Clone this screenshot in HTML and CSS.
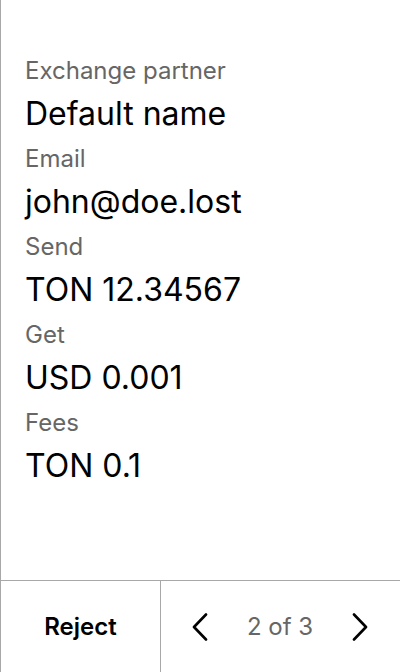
FILE: index.html
```html
<!DOCTYPE html>
<html>
<head>
<meta charset="utf-8">
<link rel="stylesheet" href="styles.css">
</head>
<body>
<div class="screen">
  <div class="details">
    <div class="field">
      <div class="label">Exchange partner</div>
      <div class="value">Default name</div>
    </div>
    <div class="field">
      <div class="label">Email</div>
      <div class="value">john@doe.lost</div>
    </div>
    <div class="field">
      <div class="label">Send</div>
      <div class="value">TON 12.34567</div>
    </div>
    <div class="field">
      <div class="label">Get</div>
      <div class="value">USD 0.001</div>
    </div>
    <div class="field">
      <div class="label">Fees</div>
      <div class="value">TON 0.1</div>
    </div>
  </div>
  <div class="footer">
    <button class="reject">Reject</button>
    <div class="pager">
      <button class="nav" aria-label="Previous">
        <svg width="16" height="28" viewBox="0 0 16 28"><path d="M14 1.5 L2 14 L14 26.5" fill="none" stroke="#000" stroke-width="2.6" stroke-linecap="round" stroke-linejoin="round"/></svg>
      </button>
      <span class="count">2 of 3</span>
      <button class="nav" aria-label="Next">
        <svg width="16" height="28" viewBox="0 0 16 28"><path d="M2 1.5 L14 14 L2 26.5" fill="none" stroke="#000" stroke-width="2.6" stroke-linecap="round" stroke-linejoin="round"/></svg>
      </button>
    </div>
  </div>
</div>
</body>
</html>
```

FILE: styles.css
```css
* { box-sizing: border-box; }
html, body { margin: 0; padding: 0; background: #fff; }
body { font-family: Inter, "Noto Sans", sans-serif; color: #000; }
.screen {
  width: 400px;
  height: 672px;
  border-left: 1px solid #a8a8a8;
  display: flex;
  flex-direction: column;
}
.details {
  flex: 1;
  padding: 55px 0 0 24px;
  display: flex;
  flex-direction: column;
}
.field { display: flex; flex-direction: column; margin-bottom: 9px; }
.label {
  font-size: 24px;
  line-height: 32px;
  color: #666;
  margin-bottom: 7px;
}
.value {
  font-size: 32px;
  line-height: 40px;
}
.footer {
  height: 92px;
  border-top: 1px solid #a8a8a8;
  display: flex;
}
button {
  font-family: inherit;
  background: none;
  border: 0;
  padding: 0;
  cursor: pointer;
}
.reject {
  width: 160px;
  border-right: 1px solid #a8a8a8;
  font-size: 24px;
  font-weight: 600;
  color: #000;
}
.pager {
  flex: 1;
  display: flex;
  align-items: center;
  justify-content: space-between;
  padding: 0 32px 0 31px;
}
.nav { width: 16px; height: 28px; display: flex; }
.count { font-size: 24px; color: #666; }
```
